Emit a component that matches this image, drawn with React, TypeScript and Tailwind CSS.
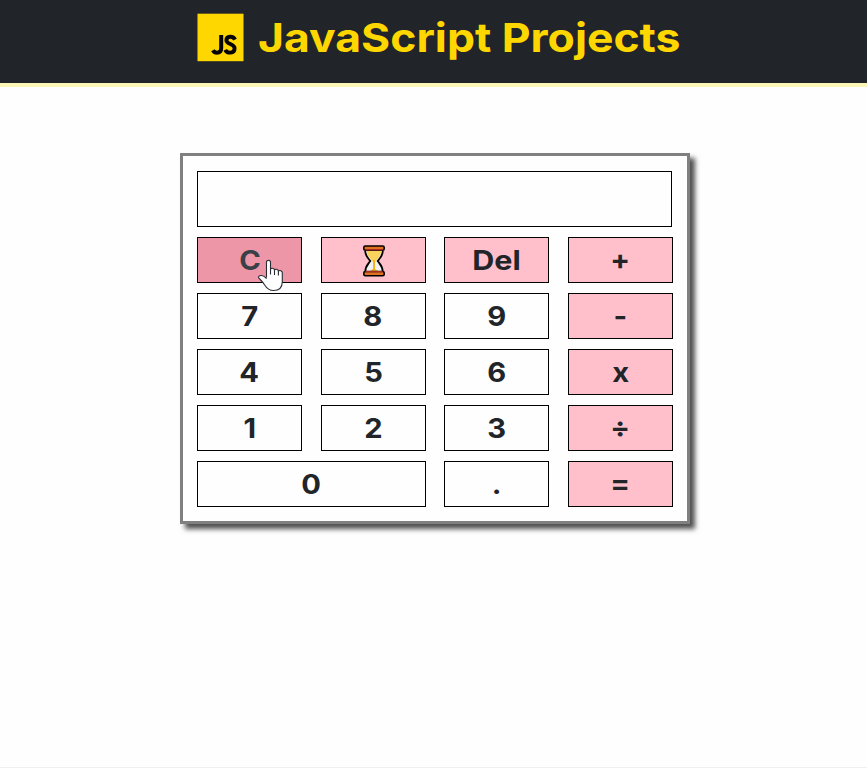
type Key = { label: string; pink?: boolean; wide?: boolean; hovered?: boolean };

const rows: Key[][] = [
  [{ label: 'C', hovered: true }, { label: 'hourglass', pink: true }, { label: 'Del', pink: true }, { label: '+', pink: true }],
  [{ label: '7' }, { label: '8' }, { label: '9' }, { label: '-', pink: true }],
  [{ label: '4' }, { label: '5' }, { label: '6' }, { label: 'x', pink: true }],
  [{ label: '1' }, { label: '2' }, { label: '3' }, { label: '÷', pink: true }],
  [{ label: '0', wide: true }, { label: '.' }, { label: '=', pink: true }],
];

function Logo() {
  return (
    <svg width="47" height="49" viewBox="0 0 47 49" className="shrink-0">
      <rect x="0.5" y="0.7" width="46" height="47.5" fill="#ffd700" />
      <path d="M24.2 22V35Q24.2 39.7 19.9 39.7Q17.3 39.7 15.9 37.2" fill="none" stroke="#050505" strokeWidth="4" />
      <path d="M38 26.6C36.2 22.6 29.4 22.9 29.4 27.2C29.4 31.6 37.6 30.3 37.6 35.3C37.6 40.8 30.2 40.7 28.2 36.8" fill="none" stroke="#050505" strokeWidth="3.9" />
    </svg>
  );
}

function Hourglass() {
  return (
    <svg width="24" height="32" viewBox="0 0 24 32" className="ml-px mt-px">
      <path d="M4 4C4 10 6 12 9 16C6 20 4 22 4 28H20C20 22 18 20 15 16C18 12 20 10 20 4Z" fill="#f2f2f2" />
      <path d="M4.8 5H19.2C19.2 10 17 12 13.5 16.5H10.5C7 12 4.8 10 4.8 5Z" fill="#fbd35c" />
      <path d="M11 15H13V24L16 26H8L11 24Z" fill="#f5b51b" />
      <path d="M3.2 6C3.2 11 6.2 13 8.3 16C6.2 19 3.2 21 3.2 27M20.8 6C20.8 11 17.8 13 15.7 16C17.8 19 20.8 21 20.8 27" fill="none" stroke="#000" strokeWidth="1.8" />
      <rect x="1.8" y="1" width="20.4" height="4.2" rx="1.5" fill="#e27022" stroke="#000" strokeWidth="1.6" />
      <rect x="1.8" y="26.5" width="20.4" height="4.2" rx="1.5" fill="#e27022" stroke="#000" strokeWidth="1.6" />
      <path d="M3.5 4.8H20.5M3.5 26.6H20.5" stroke="#a72e22" strokeWidth="1.4" />
    </svg>
  );
}

function Pointer() {
  return (
    <svg width="26" height="33" viewBox="0 0 26 33" className="absolute left-[60px] top-[21px] z-10">
      <path d="M8.5 18.5V3.3C8.5.5 12.5.5 12.5 3.3V10.2C13.2 8.8 16.3 9 16.5 11C17.4 9.8 20 10 20.4 12C21.7 11 24.3 11.7 24.3 14V22.5C24.3 28.5 21 31.5 15.5 31.5C10.8 31.5 8.7 29.2 6.5 25.7C4.7 22.8 2.8 21.2.9 19.2C-.1 17.7 1.5 16.3 3.5 16.5C5.5 16.7 7.2 18 8.5 19.6" fill="#fff" stroke="#292c33" strokeWidth="1.1" />
      <path d="M12.5 9.5V15.5M16.5 10.5V16M20.4 11.5V16.5" stroke="#292c33" strokeWidth="1.1" />
    </svg>
  );
}

export default function App() {
  return (
    <div className="h-[768px] overflow-hidden border-b border-[#f0f0f0] bg-[#fefefe] font-['Inter',sans-serif] font-bold text-[#212529]">
      <header className="flex h-[87px] items-start border-b-4 border-[#fbf5b7] bg-[#212529] pl-[197px] pt-[13px]">
        <Logo />
        <h1 className="ml-[14px] mt-px origin-left scale-x-[1.112] whitespace-nowrap text-[40px] leading-[48px] text-[#ffd700]">JavaScript Projects</h1>
      </header>
      <main className="ml-[180px] mt-[66px] flex h-[371px] w-[510px] flex-col gap-[10px] border-[3px] border-[#808080] px-[14px] pt-[15px] shadow-[5px_5px_5px_#505050]">
        <div className="h-[56px] w-[475px] shrink-0 border border-black" />
        {rows.map((row, i) => (
          <div key={i} className="flex w-[476px] justify-between">
            {row.map((key) => (
              <button
                key={key.label}
                className={`relative flex h-[46px] shrink-0 items-center justify-center border border-black text-[27px] leading-none ${key.wide ? 'w-[228.67px]' : 'w-[105px]'} ${key.hovered ? 'bg-[#ed96a7] text-[#3a4047]' : key.pink ? 'bg-[#ffc0cb]' : ''} ${'+÷='.includes(key.label) ? 'pb-[2px]' : 'pt-px'}`}
              >
                {key.label === 'hourglass' ? <Hourglass /> : <span className={key.label === 'Del' ? 'scale-x-[1.13]' : 'scale-x-[1.08]'}>{key.label}</span>}
                {key.hovered && <Pointer />}
              </button>
            ))}
          </div>
        ))}
      </main>
    </div>
  );
}
